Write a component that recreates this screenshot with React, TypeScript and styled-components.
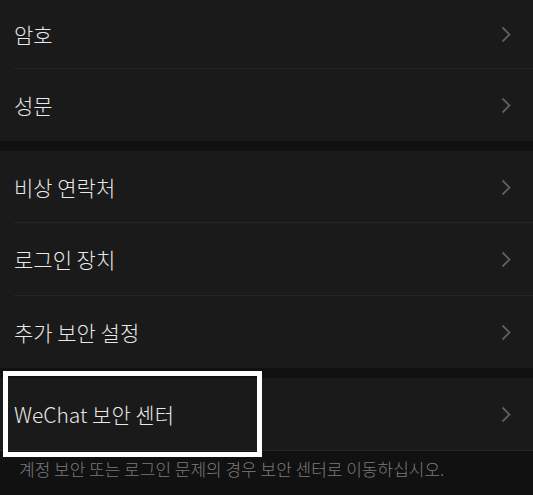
import React from "react";
import styled, { createGlobalStyle } from "styled-components";

const Global = createGlobalStyle`
  html, body { margin: 0; padding: 0; background: #111111; }
  body { font-family: "Noto Sans CJK KR", "Noto Sans", Roboto, sans-serif; }
`;

const Page = styled.div`
  width: 533px;
  height: 495px;
  background: #111111;
  overflow: hidden;
  position: relative;
  display: flex;
  flex-direction: column;
`;

const Group = styled.div<{ $gapTop?: boolean }>`
  display: flex;
  flex-direction: column;
  background: #1a1a1a;
  margin-top: ${(p) => (p.$gapTop ? "10px" : "0")};
`;

const Row = styled.div<{ $h?: number; $last?: boolean; $bottomLine?: boolean }>`
  height: ${(p) => p.$h ?? 72}px;
  display: flex;
  align-items: center;
  justify-content: space-between;
  padding: 0 22px 0 14px;
  box-sizing: border-box;
  position: relative;
  border-bottom: ${(p) => (p.$bottomLine ? "1px solid #262626" : "none")};
  &::after {
    content: "";
    display: ${(p) => (p.$last ? "none" : "block")};
    position: absolute;
    left: 14px;
    right: 0;
    bottom: 0;
    height: 1px;
    background: #252525;
  }
`;

const Label = styled.span`
  color: #e8e8e8;
  font-size: 21px;
  font-weight: 300;
  line-height: 1;
  letter-spacing: 0px;
`;

const Footer = styled.div`
  padding: 7px 19px 0;
  color: #7b7b7b;
  font-size: 17px;
  font-weight: 300;
  line-height: 22px;
  white-space: nowrap;
`;

const Highlight = styled.div`
  position: absolute;
  left: 3px;
  top: 371px;
  width: 249px;
  height: 76px;
  border: 5px solid #ffffff;
  pointer-events: none;
`;

const Chevron = () => (
  <svg width="10" height="17" viewBox="0 0 10 17">
    <path d="M1.5 1.5 L8.5 8.5 L1.5 15.5" fill="none" stroke="#5e5e5e" strokeWidth="1.8" />
  </svg>
);

const Item = ({ label, h, last, bottomLine }: { label: string; h?: number; last?: boolean; bottomLine?: boolean }) => (
  <Row $h={h} $last={last} $bottomLine={bottomLine}>
    <Label>{label}</Label>
    <Chevron />
  </Row>
);

export default function App() {
  return (
    <>
      <Global />
      <Page>
        <Group>
          <Item label="암호" h={69} />
          <Item label="성문" last />
        </Group>
        <Group $gapTop>
          <Item label="비상 연락처" />
          <Item label="로그인 장치" h={73} />
          <Item label="추가 보안 설정" last />
        </Group>
        <Group $gapTop>
          <Item label="WeChat 보안 센터" h={73} last bottomLine />
        </Group>
        <Footer>계정 보안 또는 로그인 문제의 경우 보안 센터로 이동하십시오.</Footer>
        <Highlight />
      </Page>
    </>
  );
}
